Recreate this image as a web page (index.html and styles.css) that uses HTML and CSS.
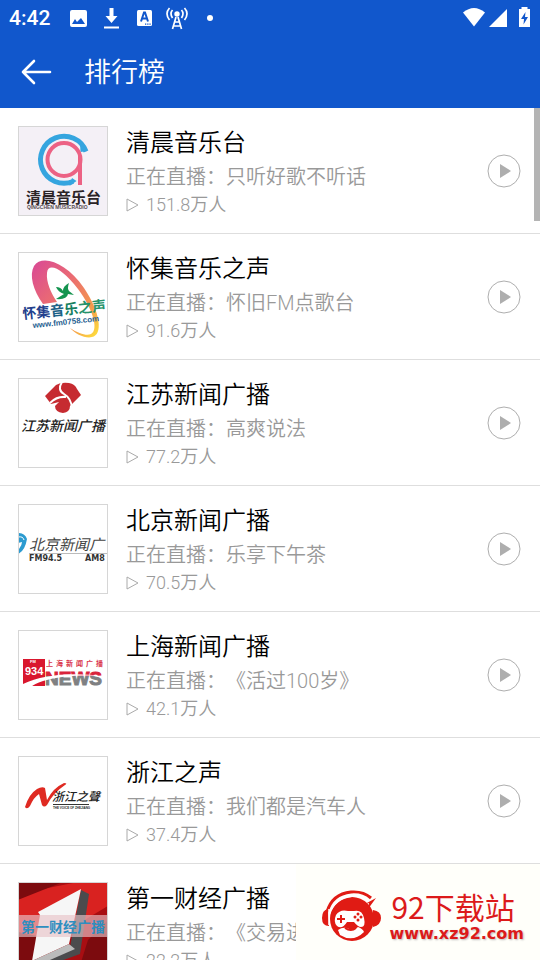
FILE: index.html
```
<!DOCTYPE html>
<html lang="zh-CN">
<head>
    <meta charset="UTF-8">
    <meta name="viewport" content="width=device-width, initial-scale=1.0">
    <title>排行榜</title>
    <link rel="stylesheet" href="styles.css">
</head>
<body>

    <header class="top">
        <div class="status">
            <span class="time">4:42</span>
            <div class="status-left">
                <svg viewBox="0 0 24 24"><path fill="#fff" fill-rule="evenodd" d="M6 4h13q2 0 2 2v13q0 2-2 2H6q-2 0-2-2V6q0-2 2-2zM6 18h13l-4-6-4 4-2-3z"/></svg>
                <svg viewBox="0 0 24 24"><path fill="#fff" d="M10.500 2h4v8h4l-6 7-6-7h4zM5 20.500h15v2H5z"/></svg>
                <svg viewBox="0 0 24 24"><rect x="5" y="4" width="15" height="16" rx="1.500" fill="#fff"/><path fill="none" stroke="#1157cc" stroke-width="2" d="M9 15.500l3-9h1l3 9M10 12.500h5"/><path fill="#1157cc" d="M13 17.500h1.300v1.300H13zM15.200 17.500h1.300v1.300h-1.300zM17.400 17.500h1.300v1.300h-1.300z"/></svg>
                <svg viewBox="0 0 24 24"><g fill="none" stroke="#fff" stroke-width="1.700"><path d="M4.500 2Q-.5 7.500 4.500 14M19.500 2q5 5.500 0 12M7.500 4q-3 3.500 0 8M16.500 4q3 3.500 0 8"/><path d="M11 11L7.500 23M13 11l3.500 12M9.500 16h5M8.500 20h7"/></g><circle cx="12" cy="8" r="2.700" fill="#fff"/></svg>
                <svg viewBox="0 0 24 24"><circle cx="12" cy="12" r="3" fill="#fff"/></svg>
            </div>
            <div class="status-right">
                <svg viewBox="0 0 24 24"><path fill="#fff" d="M1 6.500Q12-2.500 23 6.500L12 20.500z"/></svg>
                <svg viewBox="0 0 24 24"><path fill="#fff" d="M21 3v18H3z"/></svg>
                <svg class="battery" viewBox="0 0 24 24"><path fill="#fff" fill-rule="evenodd" d="M9.500 1h6v2H18v18H7V3h2.500zM13.500 6L9 13h3l-.5 5.500 4.500-7.500h-3z"/></svg>
            </div>
        </div>
        <div class="title-bar">
            <button class="back" aria-label="返回">
                <svg viewBox="0 0 32 26"><path d="M14 2L3 13l11 11M3 13h27" fill="none" stroke="#fff" stroke-width="2.600" stroke-linecap="round" stroke-linejoin="round"/></svg>
            </button>
            <h1>排行榜</h1>
        </div>
    </header>

    <main class="content">
        <ul class="list">
            <li class="item">
                <svg class="logo" viewBox="1 1 88 88">
                    <rect width="90" height="90" fill="#f4f0f6"/>
                    <path d="M68 25.500A23.500 23.500 0 1 0 55 55.500" fill="none" stroke="#35a5df" stroke-width="5"/>
                    <path d="M62 17l7.500 8-7 1zM54 52l4.500 3-7 5z" fill="#35a5df"/>
                    <circle cx="46" cy="33.500" r="16.500" fill="none" stroke="#ec6284" stroke-width="4"/>
                    <path d="M60 30h4v29h-4z" fill="#ec6284"/>
                    <text x="8" y="77" font-size="15" font-weight="700" fill="#2b2326">清晨音乐台</text>
                    <text class="latin" x="9" y="83" font-size="5" font-weight="700" fill="#554b50">QINGCHEN MUSICRADIO</text>
                </svg>
                <div class="info">
                    <h2>清晨音乐台</h2>
                    <p class="live">正在直播：只听好歌不听话</p>
                    <p class="count"><svg viewBox="0 0 14 16"><path d="M1 2l11 6-11 6z"/></svg>151.8万人</p>
                </div>
                <button class="play" aria-label="播放"><svg viewBox="0 0 34 34"><circle cx="17" cy="17" r="16"/><path d="M13 10l11 7-11 7z"/></svg></button>
            </li>
            <li class="item">
                <svg class="logo" viewBox="1 1 88 88">
                    <defs>
                        <linearGradient id="swoosh" x1="0" y1="0" x2="1" y2="1">
                            <stop offset="0" stop-color="#d94896"/>
                            <stop offset=".4" stop-color="#ea6b73"/>
                            <stop offset=".75" stop-color="#f49a4c"/>
                            <stop offset="1" stop-color="#ffe53a"/>
                        </linearGradient>
                    </defs>
                    <path fill="url(#swoosh)" fill-rule="evenodd" d="M16 14C24 2 48 10 66 36c17 25 19 47 8 49-6 2-17-3-22-9 9 6 17 8 21 6 8-4 2-25-13-45C44 16 30 10 29 21c-1 9 4 20 10 29l-14 2C15 38 11 23 16 14z"/>
                    <path fill="#14944f" d="M38 35q5 0 7 4 0-5 6-8-2 5 0 8l5 4-6-1q-1 6-12 5l8-5q-6-2-8-7z"/>
                    <g transform="rotate(-6 6 68)">
                        <text y="67" font-size="14" font-weight="700"><tspan x="5" fill="#233f8d">怀集</tspan><tspan fill="#1d6286">音</tspan><tspan fill="#168061">乐</tspan><tspan fill="#26926b">之声</tspan></text>
                        <text class="latin" x="14" y="77" font-size="8" font-weight="700" fill="#285f91">www.fm0758.com</text>
                    </g>
                </svg>
                <div class="info">
                    <h2>怀集音乐之声</h2>
                    <p class="live">正在直播：怀旧FM点歌台</p>
                    <p class="count"><svg viewBox="0 0 14 16"><path d="M1 2l11 6-11 6z"/></svg>91.6万人</p>
                </div>
                <button class="play" aria-label="播放"><svg viewBox="0 0 34 34"><circle cx="17" cy="17" r="16"/><path d="M13 10l11 7-11 7z"/></svg></button>
            </li>
            <li class="item">
                <svg class="logo" viewBox="1 1 88 88">
                    <path fill="#c62b31" d="M27 18L38 7q5-3 13-2 6 1 8 6l4 6-11 11q0 6-7 7-8-1-8-7l4-4-8 2z"/>
                    <path fill="none" stroke="#fff" stroke-width="2" d="M44 4q-5 8 2 12 7 4 8 14M32 25q7-7 16-6"/>
                    <text class="brush" x="3" y="53" font-size="14" font-weight="500" fill="#222">江苏新闻广播</text>
                </svg>
                <div class="info">
                    <h2>江苏新闻广播</h2>
                    <p class="live">正在直播：高爽说法</p>
                    <p class="count"><svg viewBox="0 0 14 16"><path d="M1 2l11 6-11 6z"/></svg>77.2万人</p>
                </div>
                <button class="play" aria-label="播放"><svg viewBox="0 0 34 34"><circle cx="17" cy="17" r="16"/><path d="M13 10l11 7-11 7z"/></svg></button>
            </li>
            <li class="item">
                <svg class="logo" viewBox="1 1 88 88">
                    <path fill="#2c9bd0" d="M0 29q7 0 9 6-2 12-9 15v-4q4-4 4-8l-4 1z"/>
                    <path fill="none" stroke="#fff" stroke-width="1" d="M0 33q5-1 6 3"/>
                    <text class="brush" x="11" y="46" font-size="15" font-weight="400" fill="#444">北京新闻广</text>
                    <path stroke="#bbb" stroke-width="1" d="M11 49.500h79"/>
                    <text class="wide" x="11" y="57" font-size="8" font-weight="700" fill="#333">FM94.5</text>
                    <text class="wide" x="67" y="57" font-size="8" font-weight="700" fill="#333">AM8</text>
                </svg>
                <div class="info">
                    <h2>北京新闻广播</h2>
                    <p class="live">正在直播：乐享下午茶</p>
                    <p class="count"><svg viewBox="0 0 14 16"><path d="M1 2l11 6-11 6z"/></svg>70.5万人</p>
                </div>
                <button class="play" aria-label="播放"><svg viewBox="0 0 34 34"><circle cx="17" cy="17" r="16"/><path d="M13 10l11 7-11 7z"/></svg></button>
            </li>
            <li class="item">
                <svg class="logo" viewBox="1 1 88 88">
                    <defs>
                        <linearGradient id="news" gradientUnits="userSpaceOnUse" x1="0" y1="40" x2="0" y2="56">
                            <stop offset=".4" stop-color="#d9233b"/>
                            <stop offset=".4" stop-color="#7f8082"/>
                        </linearGradient>
                    </defs>
                    <path fill="#d9172e" d="M5 29h22v27H5z"/>
                    <text class="latin" x="12" y="33" font-size="4" font-weight="700" fill="#fff">FM</text>
                    <text class="latin" x="7" y="45" font-size="11" font-weight="700" fill="#fff">934</text>
                    <text y="36" font-size="7" font-weight="700" fill="#d9344a"><tspan x="28">上</tspan><tspan x="38">海</tspan><tspan x="48">新</tspan><tspan x="58">闻</tspan><tspan x="68">广</tspan><tspan x="78">播</tspan></text>
                    <text class="latin news" x="27" y="55" font-size="19" fill="url(#news)" stroke="url(#news)">NEWS</text>
                    <path fill="#fff" d="M5 54q29-14 82-8-38-2-62 5-9 3-12 6H5z"/>
                </svg>
                <div class="info">
                    <h2>上海新闻广播</h2>
                    <p class="live">正在直播：《活过100岁》</p>
                    <p class="count"><svg viewBox="0 0 14 16"><path d="M1 2l11 6-11 6z"/></svg>42.1万人</p>
                </div>
                <button class="play" aria-label="播放"><svg viewBox="0 0 34 34"><circle cx="17" cy="17" r="16"/><path d="M13 10l11 7-11 7z"/></svg></button>
            </li>
            <li class="item">
                <svg class="logo" viewBox="1 1 88 88">
                    <path fill="#df2a22" d="M7 51q4-13 12-18 5-3 8-1l2 12q6-12 17-17 4 0 1 2Q35 37 29 49q-3 3-5 0l-3-11q-5 3-9 12-3 4-5 1z"/>
                    <text class="brush" x="34" y="45" font-size="12" font-weight="500" fill="#222">浙江之聲</text>
                    <path stroke="#333" stroke-width="1" d="M35 48.500h36"/>
                    <text class="latin" x="35" y="53" font-size="3" font-weight="700" fill="#222">THE VOICE OF ZHEJIANG</text>
                </svg>
                <div class="info">
                    <h2>浙江之声</h2>
                    <p class="live">正在直播：我们都是汽车人</p>
                    <p class="count"><svg viewBox="0 0 14 16"><path d="M1 2l11 6-11 6z"/></svg>37.4万人</p>
                </div>
                <button class="play" aria-label="播放"><svg viewBox="0 0 34 34"><circle cx="17" cy="17" r="16"/><path d="M13 10l11 7-11 7z"/></svg></button>
            </li>
            <li class="item">
                <svg class="logo" viewBox="1 1 88 88">
                    <rect width="90" height="90" fill="#a80e12"/>
                    <path fill="#d92220" d="M0 12L60 0h30v24L30 60 0 50z"/>
                    <path fill="#7c0b0e" d="M0 0h45L0 18zM0 50l24 5-10 35H0zM70 58l20-20v52H60z"/>
                    <path fill="#4b4b4d" d="M63 8l8 4-9 60-44 16-4-8 38-15z"/>
                    <path fill="#f6f6f6" d="M63 7L51 62 14 79l8-46-2-3z"/>
                    <path fill="#bbb" d="M14 79l37-17 6 5-41 18z"/>
                    <rect y="33" width="90" height="22" fill="#e8c3c8" fill-opacity=".65"/>
                    <text x="3" y="50" font-size="14" font-weight="700" fill="#2e8ec0">第一财经广播</text>
                </svg>
                <div class="info">
                    <h2>第一财经广播</h2>
                    <p class="live">正在直播：《交易进行时》</p>
                    <p class="count"><svg viewBox="0 0 14 16"><path d="M1 2l11 6-11 6z"/></svg>22.2万人</p>
                </div>
                <button class="play" aria-label="播放"><svg viewBox="0 0 34 34"><circle cx="17" cy="17" r="16"/><path d="M13 10l11 7-11 7z"/></svg></button>
            </li>
        </ul>
        <div class="scrollbar"></div>
    </main>

    <!-- Download site badge -->
    <div class="badge">
        <svg viewBox="0 0 60 52">
            <circle cx="31" cy="29" r="22" fill="#e01b14"/>
            <path fill="none" stroke="#e01b14" stroke-width="3" d="M6 22Q11 4 30 2q12-1 20 6"/>
            <path fill="none" stroke="#fff" stroke-width="2" d="M8 24Q14 8 31 6q9-1 17 6"/>
            <path fill="#e01b14" d="M7 19q-6 1-6 9t7 8zM52 20q8 1 8 8t-8 9z"/>
            <path fill="none" stroke="#fff" stroke-width="1.500" d="M8 19v16"/>
            <path fill="#e01b14" d="M55 8l-8 11 1-6-4 1z"/>
            <path fill="#fff" d="M15 25q4-6 12-4h6q8-2 10 7 2 9-3 9-3 0-7-5h-7q-5 8-10 4-4-4-1-11z"/>
            <path stroke="#e01b14" stroke-width="2" d="M20 25v8M16 29h8"/>
            <g fill="#e01b14"><circle cx="37" cy="24" r="1.500"/><circle cx="34" cy="27" r="1.500"/><circle cx="40" cy="27" r="1.500"/><circle cx="37" cy="30" r="1.500"/></g>
            <path fill="#fff" d="M17 40q4-3 9-2 6 4 11-1 5 2 6 5-11 11-24 3z"/>
            <path fill="none" stroke="#e01b14" stroke-width="2" d="M24 38q6 4 11 0"/>
        </svg>
        <div class="badge-text">
            <span class="badge-name">92下载站</span>
            <a class="badge-url" href="#">www.xz92.com</a>
        </div>
    </div>

</body>
</html>
```
FILE: styles.css
```
* {
    margin: 0;
    padding: 0;
    box-sizing: border-box;
}

body {
    font-family: Roboto, "Noto Sans CJK SC", sans-serif;
    display: flex;
    flex-direction: column;
    height: 100vh;
    background-color: #fff;
    overflow: hidden;
    position: relative;
    text-spacing-trim: space-all; /* Keep full-width punctuation */
}

button {
    background: none;
    border: none;
    cursor: pointer;
}

svg {
    display: block;
    flex-shrink: 0;
}

/* Status bar and title */
.top {
    background-color: #1157cc;
    color: #fff;
    flex-shrink: 0;
}

.status {
    display: flex;
    align-items: center;
    height: 36px;
    padding: 0 4px 0 9px;
}

.status svg {
    width: 24px;
    height: 24px;
}

.time {
    font-size: 21px;
    font-weight: 500;
    margin-right: 16px;
}

.status-left {
    display: flex;
    gap: 9px;
}

.status-right {
    display: flex;
    margin-left: auto;
}

.status .battery {
    margin-left: 2px;
}

.title-bar {
    display: flex;
    align-items: center;
    gap: 32px;
    height: 72px;
    padding: 0 20px;
}

.back svg {
    width: 32px;
    height: 26px;
}

h1 {
    font-size: 27px;
    font-weight: 350;
    font-family: "Noto Sans CJK SC", sans-serif;
    padding-bottom: 4px;
}

/* Station list */
.content {
    flex: 1;
    min-height: 0;
    overflow: hidden;
    position: relative;
}

.list {
    list-style: none;
}

.item {
    display: flex;
    align-items: center;
    gap: 18px;
    padding: 17px 19px 16px 18px;
    border-bottom: 1px solid #dedede;
}

.logo {
    width: 90px;
    height: 90px;
    border: 1px solid #d6d6d6;
    font-family: "Noto Sans CJK SC", sans-serif;
}

.latin {
    font-family: "Liberation Sans", sans-serif;
}

.wide {
    font-family: "DejaVu Sans", sans-serif;
}

.brush {
    font-style: italic;
}

.news {
    font-weight: 700;
    stroke-width: 1;
}

.info {
    flex: 1;
    min-width: 0;
    white-space: nowrap;
    font-weight: 350;
}

h2 {
    font-size: 24px;
    line-height: 36px;
    font-weight: 350;
    color: #000;
}

.live {
    font-size: 20px;
    line-height: 32px;
    color: #999;
}

.count {
    display: flex;
    align-items: center;
    gap: 6px;
    font-size: 18px;
    line-height: 24px;
    color: #999;
}

.count svg {
    width: 14px;
    height: 16px;
    fill: none;
    stroke: #aaa;
    stroke-width: 1;
}

.play svg {
    width: 34px;
    height: 34px;
}

.play circle {
    fill: none;
    stroke: #aeaeae;
    stroke-width: 1;
}

.play path {
    fill: #aeaeae;
}

.scrollbar {
    position: absolute;
    top: 0;
    right: 0;
    width: 6px;
    height: 113px;
    background-color: #b4b4b4;
}

/* Badge over the list */
.badge {
    position: absolute;
    right: 0;
    bottom: 0;
    display: flex;
    align-items: center;
    gap: 8px;
    height: 96px;
    padding: 8px 16px 0 25px;
    background-color: #fffffa;
}

.badge > svg {
    width: 60px;
    height: 52px;
}

.badge-text {
    display: flex;
    flex-direction: column;
}

.badge-name {
    font-family: "Noto Sans CJK SC", sans-serif;
    font-size: 30px;
    line-height: 36px;
    padding-left: 2px;
    color: #dc1a1a;
}

.badge-url {
    font-family: "DejaVu Sans", sans-serif;
    font-size: 16px;
    line-height: 20px;
    font-weight: 700;
    color: #dc1a1a;
    text-decoration: none;
    text-shadow: 1px 1px 2px #bbb;
}
```
